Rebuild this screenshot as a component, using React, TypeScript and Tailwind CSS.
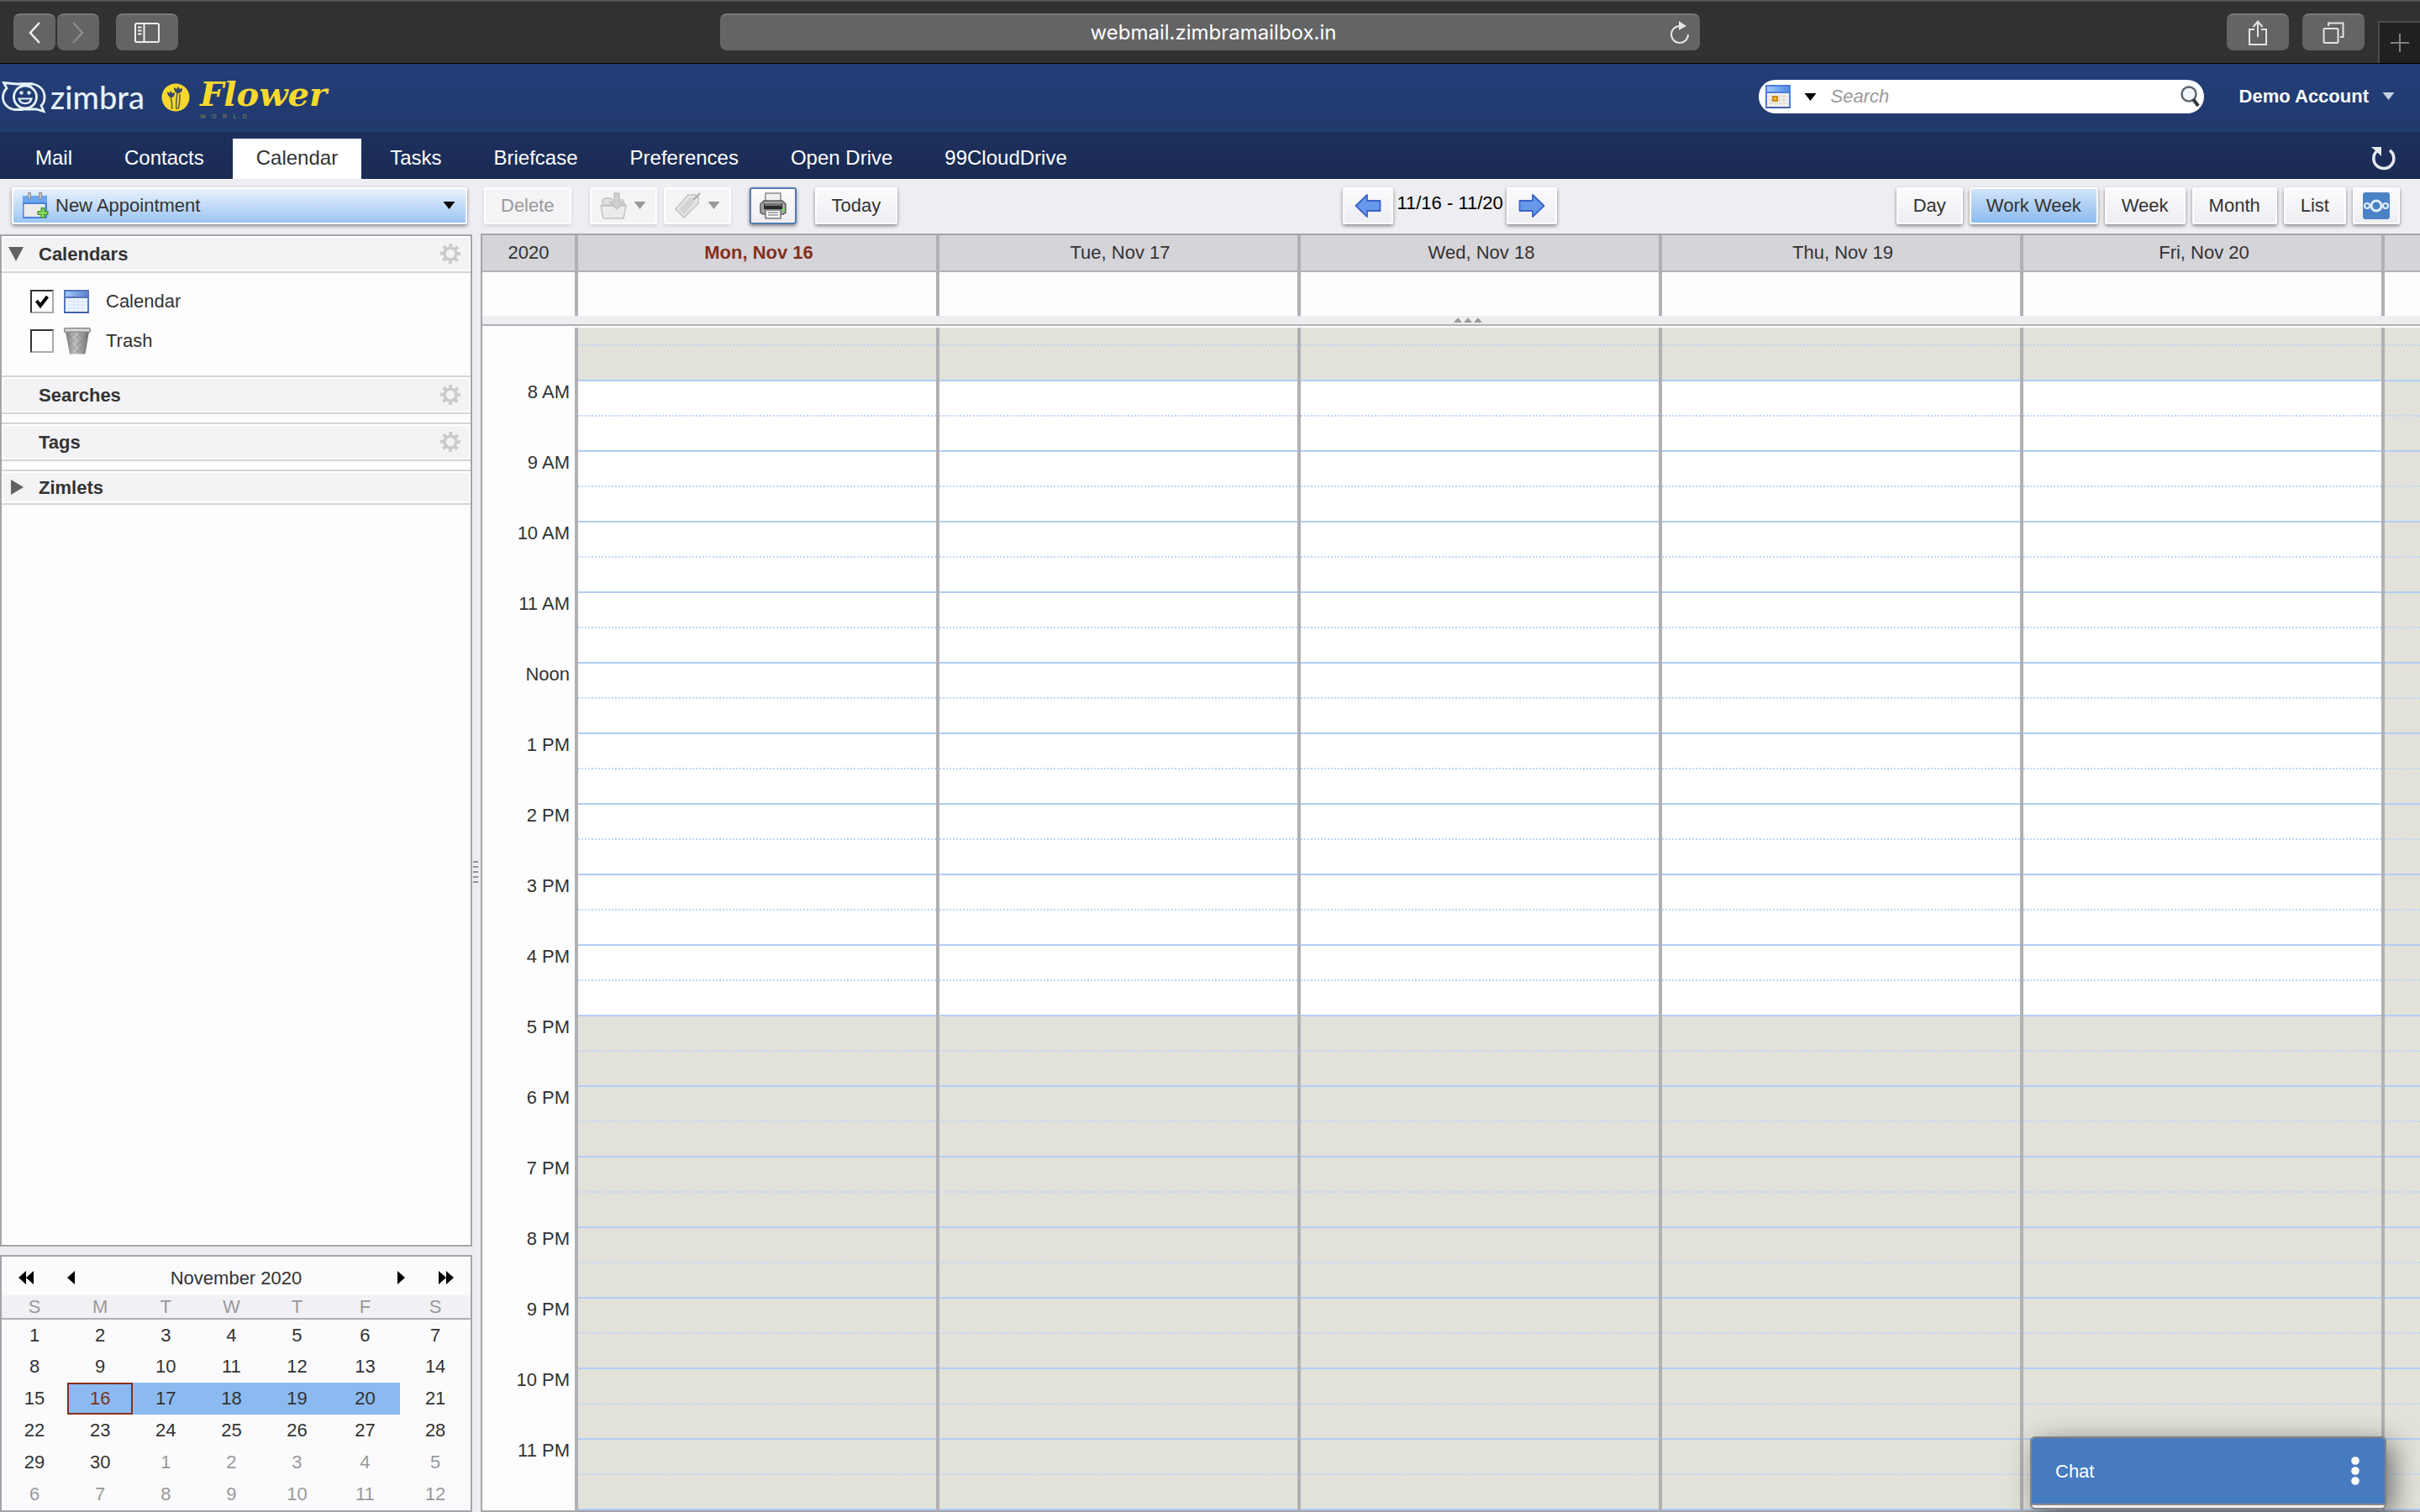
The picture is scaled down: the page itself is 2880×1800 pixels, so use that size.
import type { ReactNode } from 'react';

const tabs = ['Mail', 'Contacts', 'Calendar', 'Tasks', 'Briefcase', 'Preferences', 'Open Drive', '99CloudDrive'];

const views = ['Day', 'Work Week', 'Week', 'Month', 'List'];

const days = ['Mon, Nov 16', 'Tue, Nov 17', 'Wed, Nov 18', 'Thu, Nov 19', 'Fri, Nov 20'];

const hours = [
  '8 AM', '9 AM', '10 AM', '11 AM', 'Noon', '1 PM', '2 PM', '3 PM',
  '4 PM', '5 PM', '6 PM', '7 PM', '8 PM', '9 PM', '10 PM', '11 PM',
];

const weekdays = ['S', 'M', 'T', 'W', 'T', 'F', 'S'];

const weeks = [
  [1, 2, 3, 4, 5, 6, 7],
  [8, 9, 10, 11, 12, 13, 14],
  [15, 16, 17, 18, 19, 20, 21],
  [22, 23, 24, 25, 26, 27, 28],
  [29, 30, 1, 2, 3, 4, 5],
  [6, 7, 8, 9, 10, 11, 12],
];

const GRID = 'grid grid-cols-[110px_repeat(5,minmax(0,1fr))_46px]';

/* Icons */

const Caret = ({ className }: { className: string }) => (
  <svg viewBox="0 0 14 9" className={className} fill="currentColor" aria-hidden="true">
    <path d="M0 0h14L7 9z" />
  </svg>
);

const Gear = () => (
  <svg viewBox="0 0 24 24" className="h-6 w-6" fill="none" stroke="#cacacd" aria-hidden="true">
    <circle cx="12" cy="12" r="7" strokeWidth="3.500" />
    <circle cx="12" cy="12" r="10" strokeWidth="4" strokeDasharray="3.8 4.054" strokeDashoffset="1.9" />
  </svg>
);

const CalendarIcon = ({ marked = false }: { marked?: boolean }) => (
  <svg viewBox="0 0 30 28" className="h-7 w-[30px] shrink-0" aria-hidden="true">
    <defs>
      <linearGradient id={marked ? 'calHeadMarked' : 'calHead'} x1="0" x2="1" y1="0" y2="0">
        <stop offset="0" stopColor="#a9cbf7" />
        <stop offset="1" stopColor={marked ? '#4a8ae8' : '#5a7fd0'} />
      </linearGradient>
    </defs>
    <rect x="1" y="1" width="28" height="26" fill={marked ? '#f4f2ee' : '#eef4fe'} stroke={marked ? '#4c7fdd' : '#5577b8'} strokeWidth="2" />
    <rect
      x="1"
      y="1"
      width="28"
      height="8"
      fill={marked ? 'url(#calHeadMarked)' : 'url(#calHead)'}
      stroke={marked ? '#4c7fdd' : '#5577b8'}
      strokeWidth="2"
    />
    <path d="M7 11v14M12 11v14M17 11v14M22 11v14M3 14h24M3 18h24M3 22h24" stroke={marked ? '#dcd8d0' : '#d5e3fb'} strokeWidth="1" />
    {marked && <rect x="9" y="14" width="5" height="5" fill="#f0c330" stroke="#cf8a10" strokeWidth="2" />}
    <path d="M1 27h28" stroke="#4360a8" strokeWidth="2" />
  </svg>
);

const NewAppointmentIcon = () => (
  <svg viewBox="0 0 32 32" className="h-8 w-8" aria-hidden="true">
    <rect x="1" y="4" width="29" height="27" fill="#4b82dc" />
    <rect x="1" y="4" width="29" height="8" fill="#6ea5ef" />
    <rect x="2.500" y="14" width="25" height="15" fill="#ecebea" />
    <path d="M9 0v8M22 0v8" stroke="#8e8e92" strokeWidth="4" />
    <path d="M9 1v6M22 1v6" stroke="#d8d8da" strokeWidth="1.500" />
    <path d="M25 18v13M18.500 24.500h13" stroke="#3f9a25" strokeWidth="5" />
    <path d="M25 19.500v10M20 24.500h10" stroke="#8ddb62" strokeWidth="2.500" />
  </svg>
);

const TrashIcon = () => (
  <svg viewBox="0 0 32 32" className="h-8 w-8" aria-hidden="true">
    <defs>
      <linearGradient id="can" x1="0" x2="1" y1="0" y2="0">
        <stop offset="0" stopColor="#777" />
        <stop offset=".4" stopColor="#c4c4c4" />
        <stop offset="1" stopColor="#6d6d6d" />
      </linearGradient>
    </defs>
    <path d="M2 5h28l-4.500 26.500H7z" fill="url(#can)" />
    <path d="M5 9l19 19M11 7l15 15M18 7l9 9M6 17l12 13M27 9L8 28M20 7L6 21M13 7l-8 8M26 18L14 30" stroke="#8b8b8b" strokeWidth=".7" />
    <rect x=".7" y=".7" width="30.600" height="4.600" rx="1" fill="#d8d8d8" stroke="#8a8a8a" strokeWidth="1.400" />
  </svg>
);

const MoveIcon = () => (
  <svg viewBox="0 0 32 32" className="h-8 w-8" fill="#e0e0e2" stroke="#c2c2c5" strokeWidth="1.500" aria-hidden="true">
    <path d="M3 15v-6l3-2h7l2 2h12l3 6z" />
    <path d="M1 16h30l-3 15H4z" fill="#ebebed" />
    <path d="M17 1h6v11h5l-8 8-8-8h5z" fill="#cfcfd2" />
  </svg>
);

const TagIcon = () => (
  <svg viewBox="0 0 32 32" className="h-8 w-8" fill="#e6e6e8" stroke="#c2c2c5" strokeWidth="1.500" aria-hidden="true">
    <path d="M2 20L17 3h8l4 3v7L12 30z" />
    <path d="M6 20L19 6l5 1v6L12 26z" fill="#d3d3d6" stroke="none" />
    <path d="M23 9l8-8" stroke="#a9a9ac" strokeWidth="2" />
  </svg>
);

const PrinterIcon = () => (
  <svg viewBox="0 0 32 32" className="h-8 w-8" aria-hidden="true">
    <path d="M7 1h18v12H7z" fill="#f0f0f0" stroke="#8b8b8b" strokeWidth="1.500" />
    <path d="M5 10h22l4 4v10l-3 2H4l-3-2V14z" fill="#a5a5a5" stroke="#5c5c5c" strokeWidth="1.500" />
    <path d="M5 13h22v7H5z" fill="#2b2b2b" />
    <path d="M6 13h20v3H6z" fill="#777" />
    <path d="M7 21h18v10H7z" fill="#f6f6f6" stroke="#777" strokeWidth="1.500" />
    <path d="M10 24h12M10 27h12" stroke="#9a9a9a" strokeWidth="1.500" />
    <rect x="27" y="19" width="3" height="4" fill="#6ddc45" />
  </svg>
);

const Arrow = ({ right = false }: { right?: boolean }) => (
  <svg viewBox="0 0 32 28" className={right ? 'h-7 w-8 rotate-180' : 'h-7 w-8'} aria-hidden="true">
    <path d="M1.500 14L15 1v7h15.500v12H15v7z" fill="#6699ea" stroke="#3c62c6" strokeWidth="1.800" strokeLinejoin="round" />
  </svg>
);

const ZimbraLogo = () => (
  <svg viewBox="0 0 54 38" className="h-[38px] w-[54px]" fill="none" stroke="#e6f1f8" strokeWidth="2.800" aria-hidden="true">
    <circle cx="28" cy="18.500" r="13.500" />
    <path d="M22 3h15c9 2 14 8 14 16 0 5-2 8-4 9.500l3 7-9-2.500H22" />
    <path d="M36 3H18L2.500 1.500 6 8C3 11 1.500 15 1.500 19c0 8 7 14 14 14.500h10" />
    <path d="M20.500 20.500c2 7.500 13 7.500 15 0z" strokeWidth="2.200" />
    <circle cx="23.500" cy="13.500" r="1.800" fill="#e6f1f8" strokeWidth="1" />
    <circle cx="32.500" cy="13.500" r="1.800" fill="#e6f1f8" strokeWidth="1" />
  </svg>
);

const FlowerLogo = () => (
  <svg viewBox="0 0 34 34" className="h-[34px] w-[34px]" aria-hidden="true">
    <circle cx="17" cy="17" r="16.500" fill="#f7d92e" />
    <g fill="none" stroke="#5a5f3f" strokeWidth="1.600">
      <path d="M11 17c2 5 2 9 1.500 14M19 11c-1 7-2 14-1 20M22 13c0 6 0 12-2 18" />
    </g>
    <path d="M7 10l3 2 1-3 2 3 3-1c0 4-2 6-4 6-3 0-5-3-5-7zM15 5l3 2 2-3 2 3 3-1c0 4-2 6-5 6s-5-3-5-7z" fill="#374566" />
  </svg>
);

const ReloadIcon = () => (
  <svg viewBox="0 0 24 28" className="h-7 w-6" fill="none" stroke="#e4e4e4" strokeWidth="2" aria-hidden="true">
    <path d="M12 6A10 10 0 1 0 22 16" />
    <path d="M11 0l9 6-9 5z" fill="#e4e4e4" stroke="none" />
  </svg>
);

/* Browser toolbar */

const ChromeButton = ({ label, className, children }: { label: string; className: string; children: ReactNode }) => (
  <button
    type="button"
    aria-label={label}
    className={`flex h-11 items-center justify-center rounded-lg border-t-2 border-[#7a7a7a] bg-[#646464] ${className}`}
  >
    {children}
  </button>
);

const BrowserBar = () => (
  <div className="grid h-[76px] grid-cols-[1fr_40.5%_1fr] border-b border-t-2 border-b-black border-t-[#555] bg-[#313131]">
    <div className="flex items-center gap-5 pb-0.5 pl-4">
      <div className="flex gap-0.5">
        <ChromeButton label="Back" className="w-[50px]">
          <svg viewBox="0 0 16 26" className="h-[26px] w-4" fill="none" stroke="#eee" strokeWidth="2.500">
            <path d="M14 1L3 13l11 12" />
          </svg>
        </ChromeButton>
        <ChromeButton label="Forward" className="w-[50px]">
          <svg viewBox="0 0 16 26" className="h-[26px] w-4" fill="none" stroke="#8c8c8c" strokeWidth="2.500">
            <path d="M2 1l11 12L2 25" />
          </svg>
        </ChromeButton>
      </div>
      <ChromeButton label="Show sidebar" className="w-[74px]">
        <svg viewBox="0 0 30 24" className="h-6 w-[30px]" fill="none" stroke="#eee" strokeWidth="2">
          <rect x="1" y="1" width="28" height="22" rx="1.500" />
          <path d="M11.500 1v22M4 5.500h4.500M4 9.500h4.500M4 13.500h4.500" />
        </svg>
      </ChromeButton>
    </div>
    <div className="flex items-center pb-0.5">
      <div className="flex h-11 w-full items-center rounded-lg border-t-2 border-[#7a7a7a] bg-[#646464] pl-11 pr-3">
        <input
          aria-label="Address"
          defaultValue="webmail.zimbramailbox.in"
          className="w-full flex-1 bg-transparent text-center font-['Inter',sans-serif] text-[24px] text-white outline-none"
        />
        <button type="button" aria-label="Reload">
          <ReloadIcon />
        </button>
      </div>
    </div>
    <div className="flex items-center justify-end gap-4">
      <div className="flex gap-4 pb-0.5">
        <ChromeButton label="Share" className="w-[74px]">
          <svg viewBox="0 0 24 32" className="h-8 w-6" fill="none" stroke="#e4e4e4" strokeWidth="2">
            <path d="M8 12H2v18h20V12h-6M12 21V3M6.500 9L12 2.500 17.500 9" />
          </svg>
        </ChromeButton>
        <ChromeButton label="Tabs" className="w-[74px]">
          <svg viewBox="0 0 26 26" className="h-[26px] w-[26px]" fill="none" stroke="#e4e4e4" strokeWidth="2">
            <rect x="1.500" y="8" width="17" height="17" rx="1" />
            <path d="M7 5V1.500h17.500V18H21" />
          </svg>
        </ChromeButton>
      </div>
      <button
        type="button"
        aria-label="New tab"
        className="flex h-[50px] w-[50px] items-center justify-center self-end border-l-2 border-t-2 border-[#4c4c4c] bg-[#202020]"
      >
        <svg viewBox="0 0 22 22" className="h-[22px] w-[22px]" stroke="#828282" strokeWidth="2">
          <path d="M11 0v22M0 11h22" />
        </svg>
      </button>
    </div>
  </div>
);

/* Zimbra header */

const Banner = () => (
  <header className="bg-linear-to-b from-[#233e79] to-[#203664]">
    <div className="flex h-[84px] items-center border-b-2 border-[#1b2f59] pb-1">
      <div className="flex flex-1 items-center pt-0.5">
        <a href="#zimbra" aria-label="Zimbra" className="flex items-center gap-1 pl-0.5">
          <ZimbraLogo />
          <span className="pb-0.5 font-['Lato',sans-serif] text-[38px] font-medium leading-[36px] text-[#e6f1f8]">zimbra</span>
        </a>
        <a href="#flower" aria-label="Flower World" className="flex items-center gap-3 pl-5">
          <FlowerLogo />
          <span className="flex flex-col text-[#f7d92e]">
            <span className="font-['DejaVu_Serif',serif] text-[40px] font-bold italic leading-[46px]">Flower</span>
            <span className="flex w-14 justify-between text-[7px] leading-[8px] text-[#8f8c45]">
              {['W', 'O', 'R', 'L', 'D'].map((c) => (
                <span key={c}>{c}</span>
              ))}
            </span>
          </span>
        </a>
      </div>
      <div className="flex h-10 w-[530px] items-center rounded-[20px] bg-white pl-2">
        <CalendarIcon marked />
        <button type="button" aria-label="Search type" className="flex w-12 justify-center">
          <Caret className="h-[9px] w-[15px] text-black" />
        </button>
        <input
          type="search"
          aria-label="Search"
          placeholder="Search"
          className="h-10 flex-1 bg-white text-[22px] outline-none placeholder:italic placeholder:text-[#999]"
        />
        <button type="button" aria-label="Run search" className="pr-1">
          <svg viewBox="0 0 26 30" className="h-[30px] w-[26px]" fill="none" stroke="#5f6670" strokeWidth="2.500">
            <circle cx="12" cy="12" r="8.500" fill="#f2f6fa" />
            <path d="M17 18l6 8" stroke="#33373d" strokeWidth="4" />
          </svg>
        </button>
      </div>
      <button type="button" className="flex items-center gap-4 pb-0.5 pl-[42px] pr-[30px] text-[22px] font-bold text-white">
        Demo Account
        <Caret className="h-[9px] w-[15px] text-[#c9d1e0]" />
      </button>
    </div>

    <div className="flex h-[53px] items-end bg-linear-to-b from-[#1d305d] to-[#1a2b52]">
      <nav className="flex flex-1 gap-1.5 pl-3.5">
        {tabs.map((tab) => (
          <a
            key={tab}
            href={`#${tab}`}
            className={`flex h-12 items-center px-7 pb-0.5 text-[24px] ${
              tab === 'Calendar' ? 'bg-white text-[#333]' : 'text-white'
            }`}
          >
            {tab}
          </a>
        ))}
      </nav>
      <button type="button" aria-label="Refresh" className="self-center pr-7">
        <svg viewBox="0 0 32 32" className="h-8 w-8" fill="none" stroke="#e8ebf2" strokeWidth="3.500">
          <path d="M9 8.500A12 12 0 1 0 24 8" />
          <path d="M2 4h12v11l-4-4z" fill="#e8ebf2" stroke="none" />
        </svg>
      </button>
    </div>
  </header>
);

/* Toolbar */

const RAISED = 'border-white bg-linear-to-b from-[#fbfbfd] to-[#eeedf2] text-[#333] shadow-[0_2px_4px_rgba(0,0,0,0.45)]';
const FLAT = 'border-white bg-[#f4f4f6] text-[#999] shadow-[0_2px_4px_rgba(0,0,0,0.12)]';
const PICKED = 'border-white bg-linear-to-b from-[#d0e3f8] to-[#8cbbef] text-[#333] shadow-[0_2px_4px_rgba(0,0,0,0.45)]';
const FOCUSED = 'border-[#527bb0] bg-linear-to-b from-[#fbfbfd] to-[#eeedf2] shadow-[0_2px_4px_rgba(0,0,0,0.45)]';

const ToolButton = ({ label, look = RAISED, className = 'px-[18px]', children }: {
  label?: string;
  look?: string;
  className?: string;
  children: ReactNode;
}) => (
  <button
    type="button"
    aria-label={label}
    className={`flex h-11 shrink-0 items-center justify-center whitespace-nowrap rounded-[3px] border-2 text-[22px] ${look} ${className}`}
  >
    {children}
  </button>
);

const Toolbar = () => (
  <div className="flex h-[65px] items-center pb-0.5 pl-3.5 pr-6">
    <button
      type="button"
      className="flex h-11 w-[542px] items-center gap-2 rounded-[3px] border-2 border-white bg-linear-to-b from-[#e8f2fd] to-[#9cc5f2] pl-2.5 pr-3 text-[22px] text-[#333] shadow-[0_2px_4px_rgba(0,0,0,0.45)]"
    >
      <NewAppointmentIcon />
      <span className="flex-1 text-left">New Appointment</span>
      <Caret className="h-[9px] w-[15px] text-black" />
    </button>
    <div className="pl-5 pr-[22px]">
      <ToolButton look={FLAT}>Delete</ToolButton>
    </div>
    <div className="flex gap-2">
      <ToolButton label="Move" look={FLAT} className="w-20 gap-2">
        <MoveIcon />
        <Caret className="h-[9px] w-[15px] text-[#999]" />
      </ToolButton>
      <ToolButton label="Tag" look={FLAT} className="w-20 gap-2">
        <TagIcon />
        <Caret className="h-[9px] w-[15px] text-[#999]" />
      </ToolButton>
    </div>
    <div className="flex gap-[22px] pl-[22px]">
      <ToolButton label="Print" look={FOCUSED} className="w-14">
        <PrinterIcon />
      </ToolButton>
      <ToolButton>Today</ToolButton>
    </div>
    <div className="flex-[21]" />
    <div className="flex items-center gap-1">
      <ToolButton label="Previous week" className="w-[60px]">
        <Arrow />
      </ToolButton>
      <span className="whitespace-nowrap pb-1.5 text-[22px] text-black">11/16 - 11/20</span>
      <ToolButton label="Next week" className="w-[60px]">
        <Arrow right />
      </ToolButton>
    </div>
    <div className="flex-[16]" />
    <div className="flex justify-end gap-2">
      {views.map((view) => (
        <ToolButton key={view} look={view === 'Work Week' ? PICKED : RAISED}>
          {view}
        </ToolButton>
      ))}
      <ToolButton label="Sync" className="w-14">
        <svg viewBox="0 0 32 32" className="h-8 w-8" fill="none" stroke="#e4eef9" strokeWidth="3">
          <rect width="32" height="32" rx="3" fill="#4a82c6" stroke="none" />
          <circle cx="16" cy="16" r="6" />
          <circle cx="5" cy="16" r="3" strokeWidth="2" />
          <circle cx="27" cy="16" r="3" strokeWidth="2" />
        </svg>
      </ToolButton>
    </div>
  </div>
);

/* Left column */

const SectionHeader = ({ title, state, gear = true }: { title: string; state?: 'open' | 'closed'; gear?: boolean }) => (
  <div className="border-b-2 border-[#d5d4da]">
    <div className={`flex items-center border-2 border-white bg-[#f3f3f5] pl-1.5 pr-2.5 ${gear ? 'h-[42px]' : 'h-[38px]'}`}>
      <button type="button" className="flex flex-1 items-center text-left text-[22px] font-bold text-[#333]">
        <span className="w-9">
          {state && (
            <svg viewBox="0 0 18 18" className="h-[18px] w-[18px]" fill="#636363" aria-hidden="true">
              <path d={state === 'open' ? 'M0 1h18L9 18z' : 'M3 0l15 9L3 18z'} />
            </svg>
          )}
        </span>
        {title}
      </button>
      {gear && (
        <button type="button" aria-label={`${title} options`}>
          <Gear />
        </button>
      )}
    </div>
  </div>
);

const Folder = ({ name, checked = false, icon }: { name: string; checked?: boolean; icon: ReactNode }) => (
  <label className="flex h-[47px] items-center text-[22px] text-[#333]">
    <span className="grid h-7 w-7 place-items-center">
      <input
        type="checkbox"
        defaultChecked={checked}
        className="peer col-start-1 row-start-1 h-7 w-7 appearance-none border-2 border-b-[#aaa] border-l-[#333] border-r-[#aaa] border-t-[#333] bg-white"
      />
      <svg viewBox="0 0 16 16" className="invisible col-start-1 row-start-1 h-4 w-4 peer-checked:visible" aria-hidden="true">
        <path d="M1.500 7l4.500 6L14.500 2" fill="none" stroke="#000" strokeWidth="4" />
      </svg>
    </span>
    <span className="flex w-[62px] pl-3">{icon}</span>
    {name}
  </label>
);

const MiniCalendar = () => (
  <section className="border-2 border-[#a5a5a9] bg-[#fbfbfd]">
    <div className="flex h-[46px] items-center justify-between px-5 pt-1">
      <div className="flex gap-10">
        <button type="button" aria-label="Previous year">
          <svg viewBox="0 0 18 16" className="h-4 w-[18px]"><path d="M9 0v16L0 8zM18 0v16L9 8z" /></svg>
        </button>
        <button type="button" aria-label="Previous month">
          <svg viewBox="0 0 9 16" className="h-4 w-[9px]"><path d="M9 0v16L0 8z" /></svg>
        </button>
      </div>
      <span className="text-[22px] text-[#333]">November 2020</span>
      <div className="flex gap-10">
        <button type="button" aria-label="Next month">
          <svg viewBox="0 0 9 16" className="h-4 w-[9px]"><path d="M0 0v16l9-8z" /></svg>
        </button>
        <button type="button" aria-label="Next year">
          <svg viewBox="0 0 18 16" className="h-4 w-[18px]"><path d="M0 0v16l9-8zM9 0v16l9-8z" /></svg>
        </button>
      </div>
    </div>
    <table className="w-full table-fixed border-collapse text-center text-[22px]">
      <colgroup>
        <col span={5} className="w-[14%]" />
        <col span={2} className="w-[15%]" />
      </colgroup>
      <thead>
        <tr className="border-b-2 border-[#b0b0b4] bg-[#f1f1f5] text-[#999]">
          {weekdays.map((d, i) => (
            <th key={i} className="h-7 p-0 font-normal leading-[24px]">{d}</th>
          ))}
        </tr>
      </thead>
      <tbody>
        {weeks.map((week, w) => (
          <tr key={w}>
            {week.map((day, d) => {
              const otherMonth = w > 3 && day < 15;
              const today = w === 2 && day === 16;
              const shown = w === 2 && d > 0 && d < 6;
              return (
                <td
                  key={d}
                  className={`h-[38px] p-0 leading-[34px] ${shown ? 'bg-[#8bbaf0]' : ''} ${
                    otherMonth ? 'text-[#999]' : today ? 'text-[#83301c]' : 'text-[#333]'
                  }`}
                >
                  {today ? <div className="border-2 border-[#83301c] leading-[34px]">{day}</div> : day}
                </td>
              );
            })}
          </tr>
        ))}
      </tbody>
    </table>
  </section>
);

const Sidebar = () => (
  <aside className="flex w-[562px] shrink-0 flex-col gap-2.5 pt-px">
    <section className="flex-1 border-2 border-[#a5a5a9] bg-[#fdfdfd]">
      <SectionHeader title="Calendars" state="open" />
      <div className="border-b-2 border-[#d5d4da] pb-[18px] pl-[34px] pt-2.5">
        <Folder name="Calendar" checked icon={<CalendarIcon />} />
        <Folder name="Trash" icon={<TrashIcon />} />
      </div>
      <SectionHeader title="Searches" />
      <div className="h-3 border-b-2 border-[#d5d4da]" />
      <SectionHeader title="Tags" />
      <div className="h-3 border-b-2 border-[#d5d4da]" />
      <SectionHeader title="Zimlets" state="closed" gear={false} />
    </section>
    <MiniCalendar />
  </aside>
);

/* Work week grid */

const DayColumn = ({ weekend = false }: { weekend?: boolean }) => (
  <div className="border-l-4 border-[#b1b1b3]">
    <div className="h-5 bg-[#e2e2da]" />
    <div className="h-[42px] border-t-2 border-dotted border-[#bfd3f1] bg-[#e2e2da]" />
    {hours.map((hour, i) => {
      const shade = weekend || i >= 9 ? 'bg-[#e2e2da]' : 'bg-white';
      return (
        <div key={hour} className={shade}>
          <div className="h-[42px] border-t-2 border-[#b0cef5]" />
          <div className="h-[42px] border-t-2 border-dotted border-[#bfd6f8]" />
        </div>
      );
    })}
    <div className="h-0.5 bg-[#b0cef5]" />
  </div>
);

const WorkWeek = () => (
  <main className="flex min-w-0 flex-1 flex-col border-y-2 border-l-2 border-[#a5a5a9] bg-[#fdfdfd]">
    <div className={`${GRID} h-11 text-center text-[22px] leading-[42px] text-[#333]`}>
      <div className="border-b-2 border-[#b1b1b3] bg-[#d5d4d9]">2020</div>
      {days.map((day, i) => (
        <div
          key={day}
          className={`border-b-2 border-l-4 border-[#b1b1b3] bg-[#d5d4d9] pl-1 ${i === 0 ? 'font-bold text-[#83301c]' : ''}`}
        >
          {day}
        </div>
      ))}
      <div className="border-b-2 border-l-4 border-[#b1b1b3] bg-[#d5d4d9]" />
    </div>
    <div className={`${GRID} h-[52px]`}>
      <div />
      {days.map((day) => (
        <div key={day} className="border-l-4 border-[#b1b1b3]" />
      ))}
      <div className="border-l-4 border-[#b1b1b3]" />
    </div>
    <div className="flex h-3 items-center justify-center border-b-2 border-[#b1b1b3] bg-[#eeedf2] pl-10">
      <svg viewBox="0 0 34 6" className="h-1.5 w-[34px]" fill="#9c9ca0" aria-hidden="true">
        <path d="M0 6l5-6 5 6zM12 6l5-6 5 6zM24 6l5-6 5 6z" />
      </svg>
    </div>
    <div className={`${GRID} pt-0.5`}>
      <div className="pr-1.5 pt-[63px] text-right text-[22px] text-[#333]">
        {hours.map((hour) => (
          <div key={hour} className="h-21 leading-[28px] last:h-20">{hour}</div>
        ))}
      </div>
      {days.map((day) => (
        <DayColumn key={day} />
      ))}
      <DayColumn weekend />
    </div>
  </main>
);

const Splitter = () => (
  <div className="flex w-2.5 items-center pl-px">
    <svg viewBox="0 0 6 28" className="h-7 w-1.5" stroke="#929296" strokeWidth="2" aria-hidden="true">
      <path d="M0 1h6M0 7h6M0 13h6M0 19h6M0 25h6" />
    </svg>
  </div>
);

const ChatBar = () => (
  <section className="absolute bottom-[3px] right-10 w-[424px] rounded-md border-2 border-[#828282] bg-[#f1f0f5] pb-[3px] shadow-[8px_8px_32px_rgba(0,0,0,0.5)]">
    <div className="flex h-20 items-center justify-between rounded-t-sm border-b-2 border-[#8a8a8e] bg-[#477bc0] pl-7 pr-7">
      <span className="text-[22px] text-white">Chat</span>
      <button type="button" aria-label="Chat menu">
        <svg viewBox="0 0 14 34" className="h-[34px] w-3.5" fill="#fff">
          <circle cx="7" cy="5" r="4.800" />
          <circle cx="7" cy="17" r="4.800" />
          <circle cx="7" cy="29" r="4.800" />
        </svg>
      </button>
    </div>
  </section>
);

const App = () => {
  return (
    <div className="relative flex min-h-screen flex-col overflow-hidden bg-[#eeedf2] font-['Liberation_Sans',Arial,sans-serif]">
      <BrowserBar />
      <Banner />
      <Toolbar />
      <div className="flex flex-1">
        <Sidebar />
        <Splitter />
        <WorkWeek />
      </div>
      <ChatBar />
    </div>
  );
};

export default App;
